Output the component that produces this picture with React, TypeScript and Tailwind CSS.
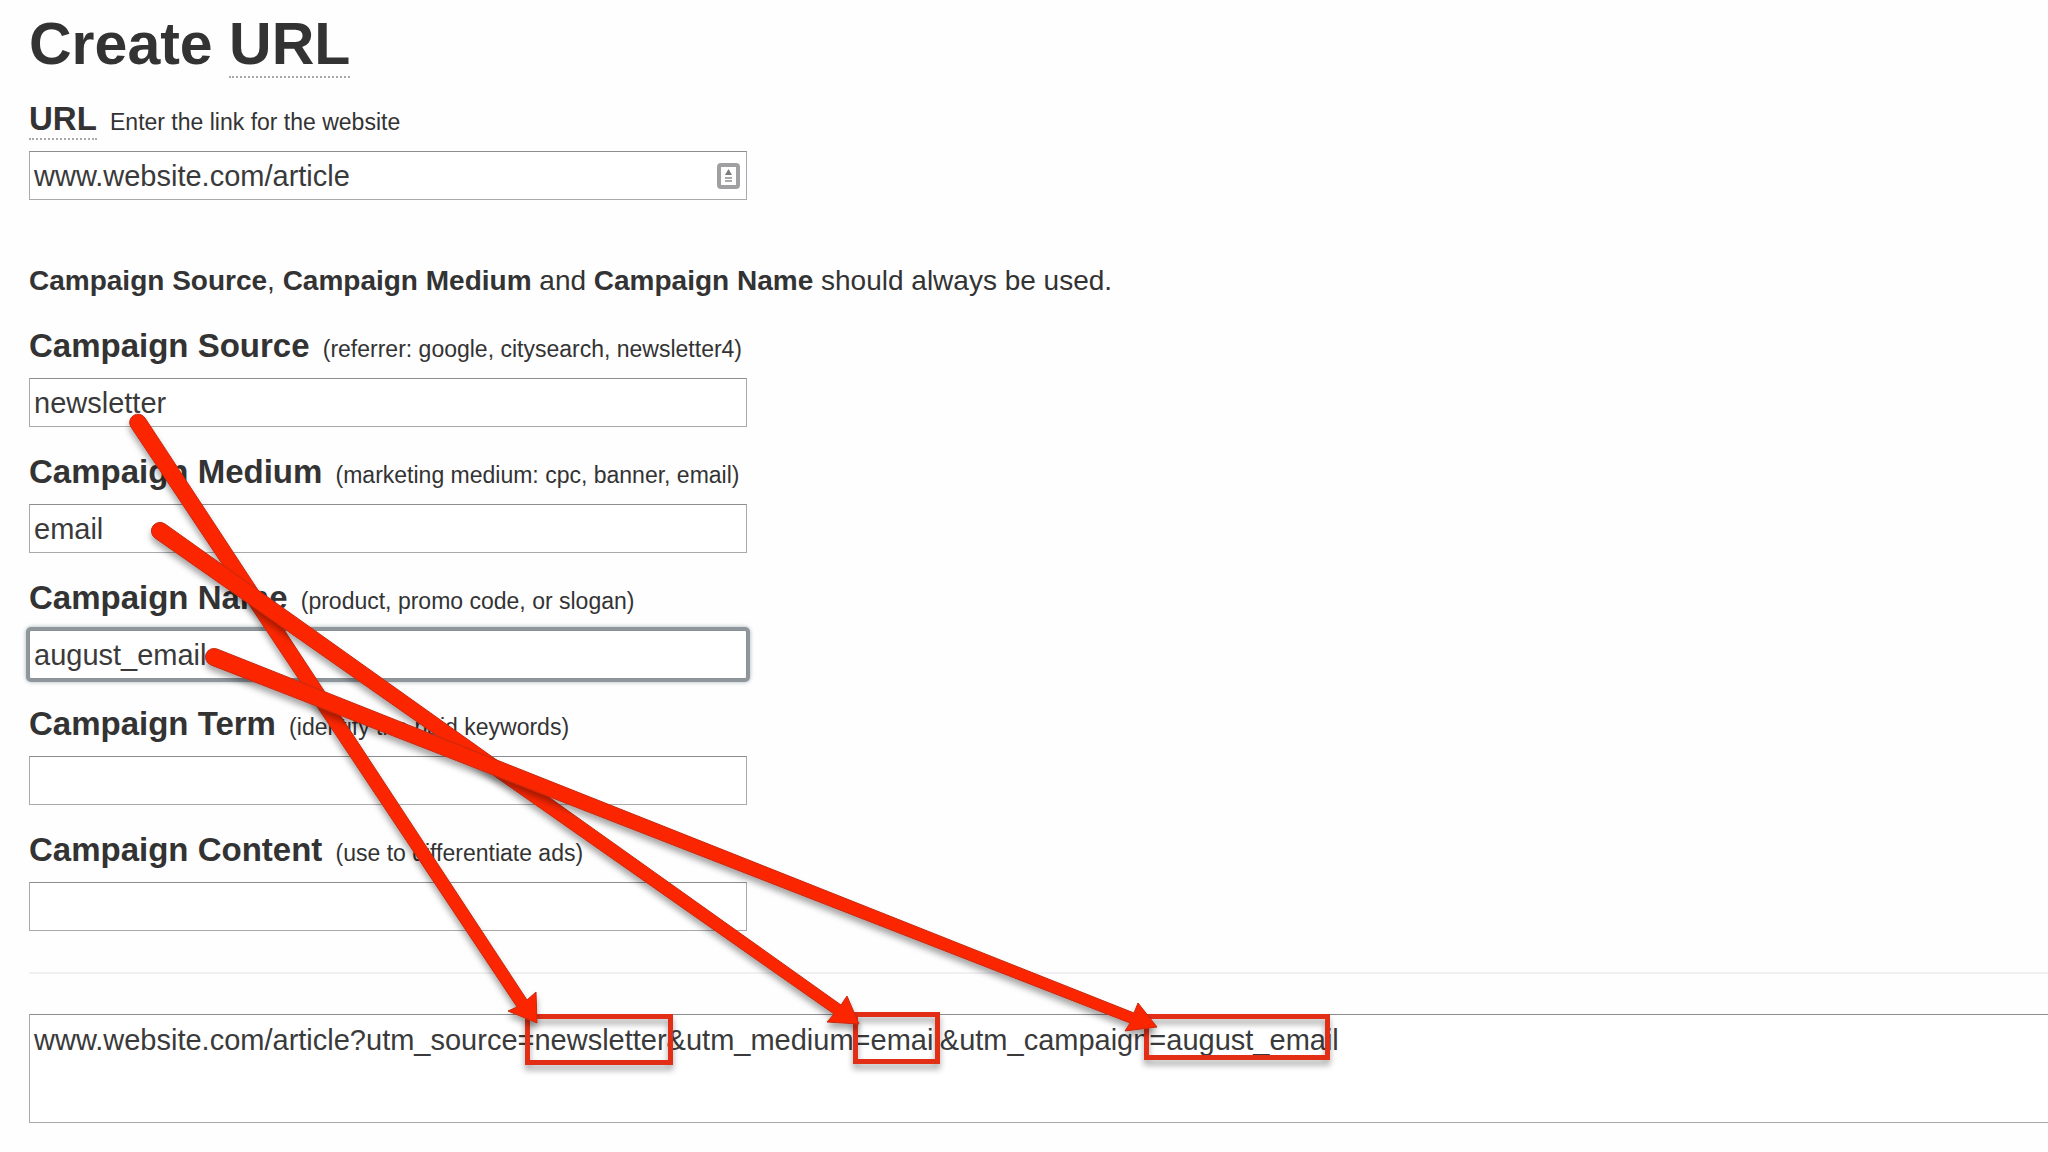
type FieldProps = {
  id: string;
  label: string;
  hint: string;
  value?: string;
  focused?: boolean;
};

const inputBase =
  "block h-[49px] w-full border border-[#a9a9ab] border-t-[#8e8e90] bg-white px-1 pt-0.5 text-[29px] text-[#3a3a3b] outline-none";
const inputFocused =
  "block h-[49px] w-full rounded-xs border border-[#8b9297] bg-white px-1 pt-0.5 text-[29px] text-[#3a3a3b] shadow-[0_0_0_3px_#8f979d,0_0_4px_3px_#a9b3b9] outline-none";

function Field({ id, label, hint, value = "", focused = false }: FieldProps) {
  return (
    <div className="mb-[25px]">
      <label htmlFor={id} className="block h-[52px] whitespace-nowrap text-[33px] leading-[40px] font-bold">
        {label} <span className="ml-1 text-[23px] leading-[40px] font-normal">{hint}</span>
      </label>
      <input id={id} type="text" defaultValue={value} className={focused ? inputFocused : inputBase} />
    </div>
  );
}

type ArrowProps = { body: string };

function Arrow({ body }: ArrowProps) {
  return (
    <path
      d={body}
      fill="#fb2603"
      stroke="#c52a12"
      strokeWidth="1"
      strokeLinejoin="round"
      filter="url(#drop)"
    />
  );
}

function Annotations() {
  return (
    <svg
      className="pointer-events-none absolute top-0 left-0"
      width="1400"
      height="1152"
      viewBox="0 0 1400 1152"
      aria-hidden="true"
    >
      <defs>
        <filter id="drop" filterUnits="userSpaceOnUse" x="0" y="0" width="1400" height="1152">
          <feDropShadow dx="0" dy="5" stdDeviation="3" floodColor="#000" floodOpacity="0.35" />
        </filter>
      </defs>
      <g fill="none" stroke="#e32f13" strokeWidth="5">
        <rect x="527.5" y="1016.5" width="143" height="46" filter="url(#drop)" />
        <rect x="855.5" y="1014.5" width="82" height="47" filter="url(#drop)" />
        <rect x="1146.5" y="1016.5" width="181" height="41" filter="url(#drop)" />
      </g>
      <Arrow body="M131 427 A8 8 0 0 1 145 418 L527 1000 L536 992 L537 1023 L508 1011 L517 1007 Z" />
      <Arrow body="M155 538 A8 8 0 0 1 165 524 L841 1005 L847 996 L859 1024 L827 1022 L834 1014 Z" />
      <Arrow body="M211 665 A8 8 0 0 1 217 649 L1134 1013 L1138 1003 L1157 1027 L1125 1031 L1130 1023 Z" />
    </svg>
  );
}

export default function App() {
  return (
    <main className="relative min-h-screen overflow-hidden bg-[#fefefe] pb-7 pl-[29px] font-['Liberation_Sans',Arial,sans-serif] text-[#333334]">
      <h1 className="pt-3 text-[59px] leading-[64px] font-bold">
        Create <abbr className="inline-block h-[66px] border-b-2 border-dotted border-[#aaa] no-underline">URL</abbr>
      </h1>
      <form>
        <div className="max-w-[718px]">
          <div className="mt-[21px] mb-[63px]">
            <label htmlFor="url" className="block h-[52px] whitespace-nowrap text-[33px] leading-[40px] font-bold">
              <abbr className="inline-block border-b-2 border-dotted border-[#aaa] leading-[38px] no-underline">URL</abbr>{" "}
              <span className="ml-1 text-[23px] leading-[38px] font-normal">Enter the link for the website</span>
            </label>
            <div className="relative">
              <input id="url" type="text" defaultValue="www.website.com/article" className={inputBase} />
              <button type="button" aria-label="Fill from contacts" className="absolute top-3 right-[7px]">
                <svg width="23" height="26" viewBox="0 0 23 26" className="block">
                  <rect x="2" y="2" width="19" height="22" rx="2" fill="#fff" stroke="#a0a0a2" strokeWidth="4" />
                  <path d="M11.5 6 L15 12 H8 Z" fill="#7b7b7d" />
                  <path d="M8 15h7M8 18h7" stroke="#a9a9ab" strokeWidth="2" />
                </svg>
              </button>
            </div>
          </div>
        </div>
        <p className="mb-[27px] text-[28px] leading-[36px]">
          <strong>Campaign Source</strong>, <strong>Campaign Medium</strong> and <strong>Campaign Name</strong> should
          always be used.
        </p>
        <div className="max-w-[718px]">
          <Field id="source" label="Campaign Source" hint="(referrer: google, citysearch, newsletter4)" value="newsletter" />
          <Field id="medium" label="Campaign Medium" hint="(marketing medium: cpc, banner, email)" value="email" />
          <Field id="name" label="Campaign Name" hint="(product, promo code, or slogan)" value="august_email" focused />
          <Field id="term" label="Campaign Term" hint="(identify the paid keywords)" />
          <Field id="content" label="Campaign Content" hint="(use to differentiate ads)" />
        </div>
        <hr className="mt-[41px] mb-10 border-t-2 border-[#f0eff2]" />
        <textarea
          readOnly
          aria-label="Generated URL"
          className="block h-[109px] w-full resize-none overflow-hidden border border-r-0 border-[#a9a9ab] border-t-[#8e8e90] bg-white px-1 py-2 text-[29px] leading-[34px] text-[#3a3a3b] outline-none"
          defaultValue="www.website.com/article?utm_source=newsletter&utm_medium=email&utm_campaign=august_email"
        />
      </form>
      <Annotations />
    </main>
  );
}
